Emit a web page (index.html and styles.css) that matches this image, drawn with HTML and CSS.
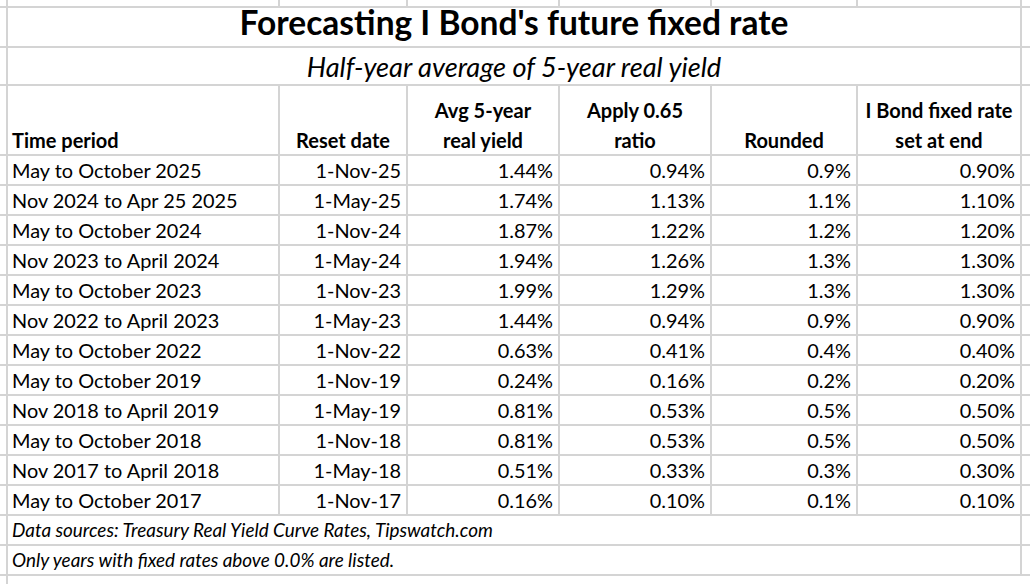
FILE: index.html
```html
<!DOCTYPE html>
<html lang="en">
<head>
<meta charset="utf-8">
<title>Forecasting I Bond's future fixed rate</title>
<link rel="stylesheet" href="styles.css">
</head>
<body>
<div class="sheet">
  <!-- top partial row -->
  <div class="c"></div><div class="c"></div><div class="c"></div><div class="c"></div><div class="c"></div><div class="c"></div><div class="c"></div><div class="c"></div>

  <!-- title -->
  <div class="c"></div>
  <div class="c title">Forecasting I Bond's future fixed rate</div>
  <div class="c"></div>

  <!-- subtitle -->
  <div class="c"></div>
  <div class="c sub">Half-year average of 5-year real yield</div>
  <div class="c"></div>

  <!-- header -->
  <div class="c"></div>
  <div class="c h hl"><span>Time period</span></div>
  <div class="c h"><span>Reset date</span></div>
  <div class="c h"><span>Avg 5-year<br>real yield</span></div>
  <div class="c h"><span>Apply 0.65<br>ratio</span></div>
  <div class="c h"><span>Rounded</span></div>
  <div class="c h"><span>I Bond fixed rate<br>set at end</span></div>
  <div class="c"></div>

  <!-- data rows -->
  <div class="c"></div><div class="c d">May to October 2025</div><div class="c d r">1-Nov-25</div><div class="c d r">1.44%</div><div class="c d r">0.94%</div><div class="c d r">0.9%</div><div class="c d r">0.90%</div><div class="c"></div>
  <div class="c"></div><div class="c d">Nov 2024 to Apr 25 2025</div><div class="c d r">1-May-25</div><div class="c d r">1.74%</div><div class="c d r">1.13%</div><div class="c d r">1.1%</div><div class="c d r">1.10%</div><div class="c"></div>
  <div class="c"></div><div class="c d">May to October 2024</div><div class="c d r">1-Nov-24</div><div class="c d r">1.87%</div><div class="c d r">1.22%</div><div class="c d r">1.2%</div><div class="c d r">1.20%</div><div class="c"></div>
  <div class="c"></div><div class="c d">Nov 2023 to April 2024</div><div class="c d r">1-May-24</div><div class="c d r">1.94%</div><div class="c d r">1.26%</div><div class="c d r">1.3%</div><div class="c d r">1.30%</div><div class="c"></div>
  <div class="c"></div><div class="c d">May to October 2023</div><div class="c d r">1-Nov-23</div><div class="c d r">1.99%</div><div class="c d r">1.29%</div><div class="c d r">1.3%</div><div class="c d r">1.30%</div><div class="c"></div>
  <div class="c"></div><div class="c d">Nov 2022 to April 2023</div><div class="c d r">1-May-23</div><div class="c d r">1.44%</div><div class="c d r">0.94%</div><div class="c d r">0.9%</div><div class="c d r">0.90%</div><div class="c"></div>
  <div class="c"></div><div class="c d">May to October 2022</div><div class="c d r">1-Nov-22</div><div class="c d r">0.63%</div><div class="c d r">0.41%</div><div class="c d r">0.4%</div><div class="c d r">0.40%</div><div class="c"></div>
  <div class="c"></div><div class="c d">May to October 2019</div><div class="c d r">1-Nov-19</div><div class="c d r">0.24%</div><div class="c d r">0.16%</div><div class="c d r">0.2%</div><div class="c d r">0.20%</div><div class="c"></div>
  <div class="c"></div><div class="c d">Nov 2018 to April 2019</div><div class="c d r">1-May-19</div><div class="c d r">0.81%</div><div class="c d r">0.53%</div><div class="c d r">0.5%</div><div class="c d r">0.50%</div><div class="c"></div>
  <div class="c"></div><div class="c d">May to October 2018</div><div class="c d r">1-Nov-18</div><div class="c d r">0.81%</div><div class="c d r">0.53%</div><div class="c d r">0.5%</div><div class="c d r">0.50%</div><div class="c"></div>
  <div class="c"></div><div class="c d">Nov 2017 to April 2018</div><div class="c d r">1-May-18</div><div class="c d r">0.51%</div><div class="c d r">0.33%</div><div class="c d r">0.3%</div><div class="c d r">0.30%</div><div class="c"></div>
  <div class="c"></div><div class="c d">May to October 2017</div><div class="c d r">1-Nov-17</div><div class="c d r">0.16%</div><div class="c d r">0.10%</div><div class="c d r">0.1%</div><div class="c d r">0.10%</div><div class="c"></div>

  <!-- notes -->
  <div class="c"></div>
  <div class="c note">Data sources: Treasury Real Yield Curve Rates, Tipswatch.com</div>
  <div class="c"></div>
  <div class="c"></div>
  <div class="c note">Only years with fixed rates above 0.0% are listed.</div>
  <div class="c"></div>

  <!-- bottom partial row -->
  <div class="c"></div>
  <div class="c rest"></div>
</div>
</body>
</html>
```
FILE: styles.css
```css
html, body {
  margin: 0;
  padding: 0;
  background: #ffffff;
}

body {
  font-family: Lato, "Liberation Sans", sans-serif;
  color: #000000;
}

.sheet {
  display: grid;
  width: 1030px;
  height: 584px;
  overflow: hidden;
  background: #d4d4d4;
  gap: 2px;
  grid-template-columns: 6px 270px 126px 150px 150px 144px 162px 1fr;
  grid-template-rows: 6px 38px 36px 68px repeat(12, 28px) 28px 28px 1fr;
}

.c {
  background: #ffffff;
  min-width: 0;
  white-space: nowrap;
}

.title {
  grid-column: 2 / 8;
  font-weight: 700;
  font-size: 33.5px;
  line-height: 28px;
  text-align: center;
}

.sub {
  grid-column: 2 / 8;
  font-style: italic;
  font-size: 27.2px;
  line-height: 36px;
  padding-top: 1px;
  text-align: center;
}

.h {
  display: flex;
  flex-direction: column;
  justify-content: flex-end;
  align-items: center;
  font-weight: 700;
  font-size: 20px;
  line-height: 30px;
  text-align: center;
}

.h span {
  display: block;
  margin-bottom: -1px;
}

.hl {
  align-items: flex-start;
  padding-left: 4px;
  text-align: left;
}

.d {
  font-size: 19.9px;
  line-height: 28px;
  padding: 0 5px 0 4px;
}

.r {
  text-align: right;
  font-variant-numeric: tabular-nums;
}

.note {
  grid-column: 2 / 8;
  font-style: italic;
  font-size: 18.9px;
  line-height: 28px;
  padding-left: 4px;
}

.rest {
  grid-column: 2 / -1;
}
```
